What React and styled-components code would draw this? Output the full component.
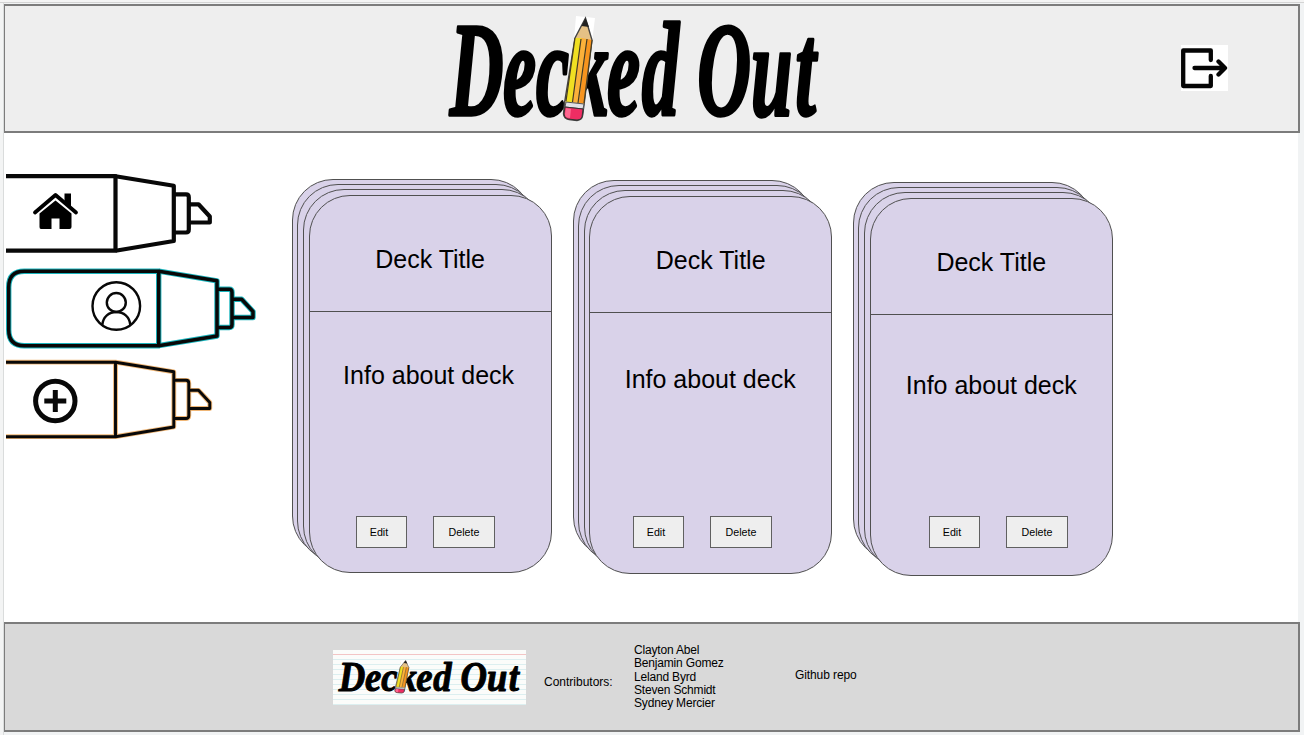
import React from 'react';
import styled, { createGlobalStyle } from 'styled-components';

const GlobalStyle = createGlobalStyle`
  * { box-sizing: border-box; }
  body {
    margin: 0;
    background: #f1f3f4;
    color: #000;
    font-family: "Liberation Sans", Arial, sans-serif;
  }
`;

const Page = styled.div`
  display: flex;
  flex-direction: column;
  width: 1304px;
  height: 735px;
  padding: 4px 4px 3px;
  box-shadow: inset 0 2px 0 #f4f4f4, inset 0 3px 0 #d4d4d4, inset 3px 0 0 #f3f4f4, inset 4px 0 0 #dadcdc;
  overflow: hidden;
`;

const Header = styled.header`
  display: flex;
  justify-content: space-between;
  align-items: flex-start;
  height: 129px;
  flex: none;
  padding: 4px 70px 0 435px;
  background: #eeeeee;
  border: 2px solid #7c7c7c;
  border-left-width: 1px;
`;

const LogoSvg = styled.svg`
  display: block;
  overflow: visible;
`;

const LogoutButton = styled.button`
  display: flex;
  width: 47px;
  height: 46px;
  margin-top: 35px;
  padding: 0;
  border: 0;
  background: #fff;
`;

const Main = styled.main`
  display: flex;
  flex: 1;
  margin-right: 2px;
  background: #fff;
`;

const Sidebar = styled.nav`
  display: flex;
  flex-direction: column;
  width: 288px;
  flex: none;
  padding: 39px 0 0 2px;
`;

const MarkerSvg = styled.svg`
  display: block;
  flex: none;
  margin-bottom: ${(p) => p.$gap}px;
`;

const Decks = styled.section`
  display: flex;
  align-items: flex-start;
  padding-top: 46px;
  gap: 20.6px;
`;

const Stack = styled.article`
  display: grid;
  width: 260px;
  height: 395px;
  flex: none;
  margin: ${(p) => p.$drop}px 0 0 0;
`;

const Card = styled.div`
  grid-area: 1 / 1;
  display: flex;
  flex-direction: column;
  width: ${(p) => p.$width || 243}px;
  height: 378px;
  margin: ${(p) => p.$y}px 0 0 ${(p) => p.$x}px;
  border: 1.4px solid #505050;
  border-radius: 41px;
  background: #d9d2e9;
  overflow: hidden;
`;

const CardTitle = styled.h2`
  height: 116px;
  margin: 0;
  padding-top: 49px;
  flex: none;
  border-bottom: 1.4px solid #505050;
  font-size: 25px;
  font-weight: 400;
  line-height: 28px;
  text-align: center;
`;

const CardInfo = styled.p`
  margin: ${(p) => p.$top}px 0 0;
  padding-right: ${(p) => p.$shift}px;
  font-size: 25px;
  line-height: 28px;
  text-align: center;
  white-space: nowrap;
`;

const Actions = styled.div`
  display: flex;
  gap: 26px;
  margin-top: auto;
  padding: 0 0 ${(p) => p.$bottom}px ${(p) => p.$left}px;
`;

const ActionButton = styled.button`
  width: ${(p) => p.$width}px;
  height: 32px;
  padding: 0 ${(p) => p.$inset}px 0 0;
  border: 1.4px solid #606060;
  border-radius: 0;
  background: #eee;
  color: #000;
  font: 10.7px "Liberation Sans", Arial, sans-serif;
`;

const Footer = styled.footer`
  display: flex;
  align-items: flex-start;
  height: 110px;
  flex: none;
  padding-left: 328px;
  background: #d9d9d9;
  border: 2px solid #7c7c7c;
  border-left-width: 1px;
  font-size: 12px;
  line-height: 14px;
`;

const NoteCard = styled.div`
  width: 193px;
  height: 55px;
  margin-top: 26px;
  padding: 8px 0 0 1px;
  background:
    linear-gradient(#f3c5c5, #f3c5c5) 0 4px / 100% 1px no-repeat,
    repeating-linear-gradient(#fbfcfa 0 4px, #dceff0 4px 5px);
`;

const FooterLabel = styled.span`
  margin: 51px 0 0 18px;
  width: 90px;
`;

const Contributors = styled.ul`
  width: 161px;
  margin: 20px 0 0;
  padding: 0;
  list-style: none;
  line-height: 13.35px;
  letter-spacing: -0.18px;
`;

const RepoLink = styled.span`
  margin-top: 44px;
  letter-spacing: -0.1px;
`;

function Logo({ width, height }) {
  return (
    <LogoSvg width={width} height={height} viewBox="440 10 390 120" preserveAspectRatio="none" aria-label="Decked Out">
      <g
        transform="scale(.56 1)"
        fontFamily='"Liberation Serif", serif'
        fontWeight="700"
        fontStyle="italic"
        fontSize="133"
        stroke="#000"
        strokeWidth="3.5"
        strokeLinejoin="round"
      >
        <text y="115" x="803 898 957 1020 1084 1146">Decked</text>
        <text y="115" x="1245 1341 1420">Out</text>
      </g>
      <path d="M576 16 595 18 592 42 574 40Z" fill="#fff" />
      <path d="M585.5 18 575 38 564.5 103 563.5 114Q564 119 569 119.500L577 120.500Q582 120 582.500 116L584 105 592 40Z" fill="#e5c185" stroke="#444" strokeWidth="1.4" />
      <path d="M575 38 581 38 572.500 102 566 102Z" fill="#f0df22" />
      <path d="M581 38 587 39 579 103 572.500 102Z" fill="#fbb13a" />
      <path d="M587 39 592 40 584 104 579 103Z" fill="#f7941e" />
      <path d="M581 39 572.500 102M587 39 578 103M575 38 566 101M592 40 584 103" stroke="#443b22" strokeWidth="1.2" fill="none" />
      <path d="M585.500 18 581.500 26 589 27Z" fill="#222" />
      <path d="M566 102 584 104 583 109 565 107Z" fill="#e1e1e5" stroke="#555" strokeWidth="1" />
      <path d="M565 107 583 109 582 117Q581 120 577 120L568 119Q564 118 564 114Z" fill="#ee2d63" stroke="#333" strokeWidth="1" />
      <path d="M566 108 571 109 570 118Q565 118 565 114Z" fill="#ff6790" />
    </LogoSvg>
  );
}

function Marker({ extended, halo, weight = 4.2, gap = 0, children }) {
  const shift = extended ? 43.2 : 0;
  const body = extended
    ? 'M109.500 4.200H-25Q-40.500 4.200-40.500 20.200V62.700Q-40.500 78.700-25 78.700H109.500Z'
    : 'M-10 4.200H109.500V78.700H-10';
  const paths = (
    <>
      <path d={body} />
      <path d="M109.500 4.200 167.800 13.800V69L109.500 78.700" />
      <path d="M168 22.300H180Q182.800 22.300 182.800 25.300V57.500Q182.800 60.500 180 60.500H168M184 32.300H192.500L203.800 44.500V50.500H184" />
    </>
  );
  return (
    <MarkerSvg width="252" height="84" $gap={gap}>
      <g transform={`translate(${shift} 0)`} fill="none" strokeLinejoin="round">
        {halo && <g stroke={halo} strokeWidth={weight + 0.8}>{paths}</g>}
        <g stroke="#080808" strokeWidth={halo ? weight - 1.1 : weight}>{paths}</g>
      </g>
      {children}
    </MarkerSvg>
  );
}

function HomeIcon() {
  return (
    <g>
      <path d="M58.500 22.500V21.500H65V35L58.500 29Z" />
      <path d="M29 40.500 49.500 23 70 40.500" fill="none" stroke="#000" strokeWidth="3.800" strokeLinecap="round" strokeLinejoin="round" />
      <path d="M33.500 41.500 49.500 28.500 65.500 41.500V55Q65.500 57 63.500 57H53.500V46.500H45.500V57H35Q33.500 57 33.500 55Z" />
    </g>
  );
}

function ProfileIcon() {
  return (
    <g fill="none" stroke="#080808" strokeWidth="2.400">
      <circle cx="110.300" cy="39" r="23.800" />
      <circle cx="110.300" cy="35.500" r="9.500" />
      <path d="M96.300 58C97 49.500 103 45 110.300 45S123.600 49.500 124.300 58" />
    </g>
  );
}

function PlusIcon() {
  return (
    <g fill="none" stroke="#080808">
      <circle cx="49.300" cy="43" r="19.700" strokeWidth="5" />
      <path d="M38.300 43H60.300M49.300 32V54" strokeWidth="5" />
    </g>
  );
}

const layers = [[0, 0], [5, 5], [11, 10]];

function Deck({ drop = 0, infoTop, infoShift = 0, actionsLeft, actionsBottom }) {
  return (
    <Stack $drop={drop}>
      {layers.map(([x, y]) => <Card key={x} $x={x} $y={y} $width={240} />)}
      <Card $x={16.6} $y={16}>
        <CardTitle>Deck Title</CardTitle>
        <CardInfo $top={infoTop} $shift={infoShift}>Info about deck</CardInfo>
        <Actions $left={actionsLeft} $bottom={actionsBottom}>
          <ActionButton $width={51} $inset={5}>Edit</ActionButton>
          <ActionButton $width={62} $inset={0}>Delete</ActionButton>
        </Actions>
      </Card>
    </Stack>
  );
}

const people = ['Clayton Abel', 'Benjamin Gomez', 'Leland Byrd', 'Steven Schmidt', 'Sydney Mercier'];

export default function App() {
  return (
    <>
      <GlobalStyle />
      <Page>
        <Header>
          <Logo width={390} height={120} />
          <LogoutButton aria-label="Log out">
            <svg width="47" height="46" fill="none" stroke="#050505" strokeWidth="4.300">
              <path d="M29.800 15V5.500H2.200V41H29.800V31" strokeLinejoin="round" strokeLinecap="round" />
              <path d="M13.500 23H43.500M37.500 16.500 44 23 37.500 29.500" strokeLinecap="round" strokeLinejoin="round" />
            </svg>
          </LogoutButton>
        </Header>
        <Main>
          <Sidebar>
            <Marker gap={11.3}><HomeIcon /></Marker>
            <Marker extended halo="#19b5bd" weight={4.6} gap={6.7}><ProfileIcon /></Marker>
            <Marker halo="#efb676" weight={4}><PlusIcon /></Marker>
          </Sidebar>
          <Decks>
            <Deck infoTop={49} infoShift={3} actionsLeft={46.4} actionsBottom={24} />
            <Deck drop={1} infoTop={52} infoShift={1} actionsLeft={42.8} actionsBottom={25} />
            <Deck drop={3} infoTop={56} actionsLeft={58.2} actionsBottom={27} />
          </Decks>
        </Main>
        <Footer>
          <NoteCard>
            <Logo width={192} height={38} />
          </NoteCard>
          <FooterLabel>Contributors:</FooterLabel>
          <Contributors>
            {people.map((name) => <li key={name}>{name}</li>)}
          </Contributors>
          <RepoLink>Github repo</RepoLink>
        </Footer>
      </Page>
    </>
  );
}
